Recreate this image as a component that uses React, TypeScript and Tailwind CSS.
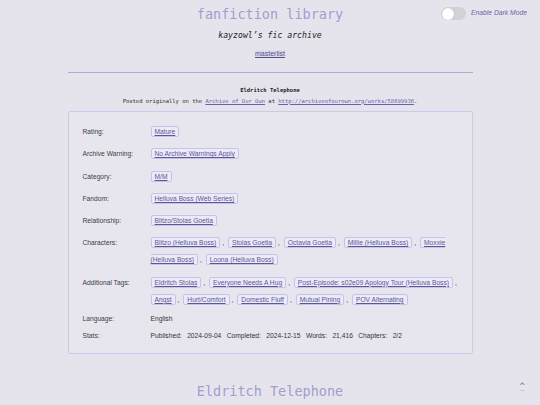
import React, { Fragment } from "react";

const mono = { fontFamily: '"DejaVu Sans Mono", monospace' };

function Tag({ children }: { children: React.ReactNode }) {
  return (
    <a className="border border-[#c6c2ea] bg-[#eceaf6] rounded-[2px] px-[3px] py-[1px] mr-[2px] text-[#5c5896] underline decoration-[0.5px] underline-offset-[1px]">
      {children}
    </a>
  );
}

function Tags({ items }: { items: string[] }) {
  return (
    <>
      {items.map((t, i) => (
        <Fragment key={i}>
          <Tag>{t}</Tag>
          {i < items.length - 1 && (
            <>
              <span className="mr-[2px]">,</span>{" "}
            </>
          )}
        </Fragment>
      ))}
    </>
  );
}

function Row({ label, children, tight }: { label: string; children: React.ReactNode; tight?: boolean }) {
  return (
    <div className={`grid grid-cols-[68px_1fr] ${tight ? "leading-[12px]" : "leading-[17px]"}`}>
      <div className="text-[#3d3d3d]">{label}</div>
      <div className="text-[#333]">{children}</div>
    </div>
  );
}

export default function App() {
  return (
    <div
      className="relative min-h-screen w-full bg-[#e5e4ec] overflow-hidden"
      style={{ fontFamily: '"Liberation Sans", Arial, sans-serif' }}
    >
      {/* dark mode toggle */}
      <div className="absolute right-[13px] top-[7px] flex items-center gap-[5px]">
        <div className="w-[25px] h-[13px] rounded-full bg-[#d2d1d7] p-[0.5px] flex items-center">
          <div className="w-[12px] h-[12px] rounded-full bg-white shadow-[0_0_1px_rgba(0,0,0,0.2)]" />
        </div>
        <span className="italic text-[6.75px] text-[#6b67a3]">Enable Dark Mode</span>
      </div>

      <div className="w-[405px] mx-auto pt-[6px] flex flex-col">
        <h1 className="text-center text-[13.5px] leading-[17px] text-[#a19ece]" style={mono}>
          fanfiction library
        </h1>
        <p className="text-center italic text-[8.2px] leading-[10px] mt-[7px] text-[#222]" style={mono}>
          kayzowl’s fic archive
        </p>
        <div className="text-center mt-[8.5px] leading-[9px] text-[7px]">
          <a className="text-[7px] text-[#555186] underline bg-[#dddbee]">masterlist</a>
        </div>
        <div className="mt-[14px] border-t border-[#aeaad6]" />

        <h2 className="mt-[14.5px] text-center font-bold text-[5.5px] leading-[7px] text-[#222]" style={mono}>
          Eldritch Telephone
        </h2>
        <p className="mt-[3.5px] text-center text-[5.5px] leading-[7px] text-[#333]" style={mono}>
          Posted originally on the{" "}
          <a className="text-[#6763ad] underline">Archive of Our Own</a> at{" "}
          <a className="text-[#6763ad] underline">http://archiveofourown.org/works/58699936</a>.
        </p>

        <div className="mt-[6.5px] border border-[#cdc9ec] rounded-[2px] bg-[#e7e6ef] pl-[14px] pr-[11px] pt-[11px] pb-[10.5px] flex flex-col gap-[5.3px] text-[6.7px]">
          <Row label="Rating:">
            <Tags items={["Mature"]} />
          </Row>
          <Row label="Archive Warning:">
            <Tags items={["No Archive Warnings Apply"]} />
          </Row>
          <Row label="Category:">
            <Tags items={["M/M"]} />
          </Row>
          <Row label="Fandom:">
            <Tags items={["Helluva Boss (Web Series)"]} />
          </Row>
          <Row label="Relationship:">
            <Tags items={["Blitzo/Stolas Goetia"]} />
          </Row>
          <Row label="Characters:">
            <Tags
              items={[
                "Blitzo (Helluva Boss)",
                "Stolas Goetia",
                "Octavia Goetia",
                "Millie (Helluva Boss)",
                "Moxxie (Helluva Boss)",
                "Loona (Helluva Boss)",
              ]}
            />
          </Row>
          <Row label="Additional Tags:">
            <Tags
              items={[
                "Eldritch Stolas",
                "Everyone Needs A Hug",
                "Post-Episode: s02e09 Apology Tour (Helluva Boss)",
                "Angst",
                "Hurt/Comfort",
                "Domestic Fluff",
                "Mutual Pining",
                "POV Alternating",
              ]}
            />
          </Row>
          <Row label="Language:" tight>
            English
          </Row>
          <Row label="Stats:" tight>
            <div className="flex gap-[5.4px]">
              <span>Published:</span>
              <span>2024-09-04</span>
              <span>Completed:</span>
              <span>2024-12-15</span>
              <span>Words:</span>
              <span>21,416</span>
              <span>Chapters:</span>
              <span>2/2</span>
            </div>
          </Row>
        </div>

        <h2 className="mt-[29.5px] text-center text-[13.5px] leading-[17px] text-[#a19ece]" style={mono}>
          Eldritch Telephone
        </h2>
      </div>

      <a
        className="absolute right-[15px] top-[380px] text-[9px] leading-[12px] text-[#6f6bb0] underline decoration-[#c8c6dc]"
        style={mono}
      >
        ^
      </a>
    </div>
  );
}
